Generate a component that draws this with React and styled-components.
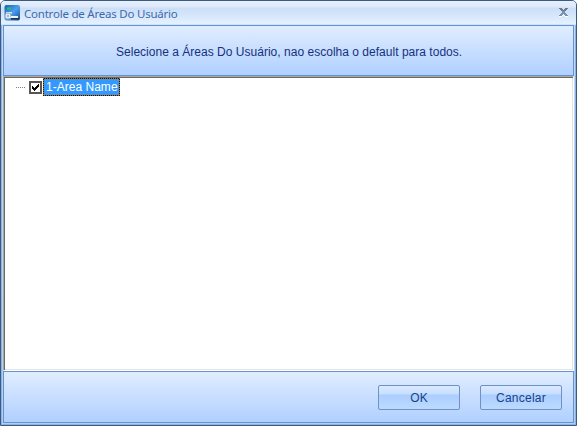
import React from "react";
import styled, { createGlobalStyle } from "styled-components";

const GlobalStyle = createGlobalStyle`
  * { box-sizing: border-box; }
  body { margin: 0; background: #fff; overflow: hidden; }
`;

const Window = styled.main`
  width: 577px;
  height: 426px;
  display: flex;
  flex-direction: column;
  border: 1px solid #3b5a82;
  border-radius: 5px 5px 0 0;
  padding: 0 2px 2px;
  background: linear-gradient(#e3efff 0, #bfdbff 26px, #b1cff4 100%);
  box-shadow: inset 1px 0 #8fb2e2, inset -1px 0 #8fb2e2, inset 0 -1px #8fb2e2;
  font-family: "Liberation Sans", Arial, sans-serif;
  font-size: 12px;
  overflow: hidden;
`;

const TitleBar = styled.header`
  height: 24px;
  flex: none;
  display: flex;
  align-items: center;
  margin: 0 -2px;
  padding: 0 7px 0 3px;
  background: linear-gradient(#e8effc 0, #dce8fa 6px, #cadef7 7px, #e4f1ff 23px, #b5d5ff 24px);
`;

const Title = styled.h1`
  flex: 1;
  margin: 1px 0 0 3px;
  font: 11.5px/18px "Noto Sans", sans-serif;
  letter-spacing: ${({ $tracking }) => $tracking}px;
  color: #3e6aaa;
  white-space: nowrap;
`;

const CloseButton = styled.button`
  width: 11px;
  height: 11px;
  margin-top: -2px;
  padding: 0;
  border: 0;
  background: none;
  svg { display: block; }
`;

const Panel = styled.section`
  height: ${({ $height }) => $height}px;
  flex: none;
  display: flex;
  align-items: center;
  justify-content: ${({ $align }) => $align};
  gap: 20px;
  padding: ${({ $padding }) => $padding};
  border: 1px solid #6593cf;
  background: linear-gradient(#e0edff, #b0d0ff);
`;

const Message = styled.p`
  margin: 0;
  line-height: 16px;
  letter-spacing: ${({ $tracking }) => $tracking}px;
  white-space: nowrap;
  color: #15317e;
`;

const Tree = styled.div`
  flex: 1;
  padding: 1px 0 0 11px;
  border: 1px solid;
  border-color: #aca899 #fff #fff #aca899;
  box-shadow: inset 1px 1px #696969, inset -1px -1px #e3e3e3;
  background: #fff;
`;

const TreeRow = styled.label`
  display: flex;
  align-items: center;
  height: 18px;
`;

const Connector = styled.span`
  width: 10px;
  height: 1px;
  margin: 1px 3px 0 1px;
  background: repeating-linear-gradient(90deg, #808080 0 1px, #fff 1px 2px);
`;

const CheckBox = styled.span`
  width: 13px;
  height: 13px;
  margin: 1px 1px 0 0;
  border: 2px solid #555;
  background: #fff;
  svg { display: block; }
`;

const NodeLabel = styled.span`
  width: 77px;
  height: 18px;
  padding: 1px;
  background:
    linear-gradient(#3399ff, #3399ff) content-box,
    conic-gradient(#151515 25%, #cc6600 0 50%, #151515 0 75%, #cc6600 0) 0 0 / 2px 2px;
  color: #fff;
  line-height: 16px;
  text-indent: 2px;
  letter-spacing: 0.02px;
  white-space: nowrap;
`;

const Button = styled.button`
  width: 82px;
  height: 25px;
  padding: 1px 0 0;
  border: 1px solid #7091c4;
  border-radius: 2px;
  background: linear-gradient(#dceaff 0, #c6deff 8px, #abceff 9px, #bddaff 100%);
  color: #15428b;
  font: 12px/22px "Liberation Sans", Arial, sans-serif;
  letter-spacing: ${({ $tracking = 0 }) => $tracking}px;
`;

const AppIcon = () => (
  <svg width="17" height="17" viewBox="0 0 17 17">
    <defs>
      <linearGradient id="screen" x1="0" y1="0" x2="1" y2="1">
        <stop stopColor="#185eaf" />
        <stop offset=".5" stopColor="#4aa0ee" />
        <stop offset="1" stopColor="#174b92" />
      </linearGradient>
    </defs>
    <rect x=".5" y="0" width="15.5" height="15.5" rx="2" fill="url(#screen)" />
    <path d="M7 13h8v1.5H7z" fill="#17305c" />
    <path d="M3 2.5h4v2H3z" fill="#20c957" />
    <path d="M2 7h6v1.5H2z" fill="#d6e4ed" />
    <circle cx="4" cy="11" r="3" fill="#e6edf2" stroke="#9aacbd" />
    <circle cx="4" cy="11" r="1" fill="#86a0b8" />
    <path d="M7 11h7v2H6z" fill="#eef3f6" />
  </svg>
);

const CloseIcon = () => (
  <svg width="11" height="11" viewBox="0 0 11 11" shapeRendering="crispEdges">
    <path d="M1 9h3l1.5-2L7 9h3v1H7L5.5 8 4 10H1z" fill="#fff" />
    <path d="M1 1h3l1.5 2L7 1h3L7 5l3 4H7L5.5 7 4 9H1l3-4z" fill="#7891b5" />
    <path d="M1 1h3l1.5 2L7 1h3L8 4H3z" fill="#707987" />
  </svg>
);

const CheckIcon = () => (
  <svg width="9" height="9" viewBox="0 0 9 9" shapeRendering="crispEdges">
    <path d="M1 3h1v1h1v1h1V4h1V3h1V2h1V1h1v3H7v1H6v1H5v1H4v1H3V7H2V6H1z" fill="#000" />
  </svg>
);

export default function App() {
  return (
    <>
      <GlobalStyle />
      <Window>
        <TitleBar>
          <AppIcon />
          <Title $tracking={-0.22}>Controle de Áreas Do Usuário</Title>
          <CloseButton aria-label="Fechar"><CloseIcon /></CloseButton>
        </TitleBar>
        <Panel $height={51} $align="flex-start" $padding="2px 0 0 112px">
          <Message $tracking={0.02}>Selecione a Áreas Do Usuário, nao escolha o default para todos.</Message>
        </Panel>
        <Tree>
          <TreeRow>
            <Connector />
            <CheckBox role="checkbox" aria-checked="true"><CheckIcon /></CheckBox>
            <NodeLabel>1-Area Name</NodeLabel>
          </TreeRow>
        </Tree>
        <Panel $height={52} $align="flex-end" $padding="0 11px 0 0">
          <Button>OK</Button>
          <Button $tracking={0.25}>Cancelar</Button>
        </Panel>
      </Window>
    </>
  );
}
